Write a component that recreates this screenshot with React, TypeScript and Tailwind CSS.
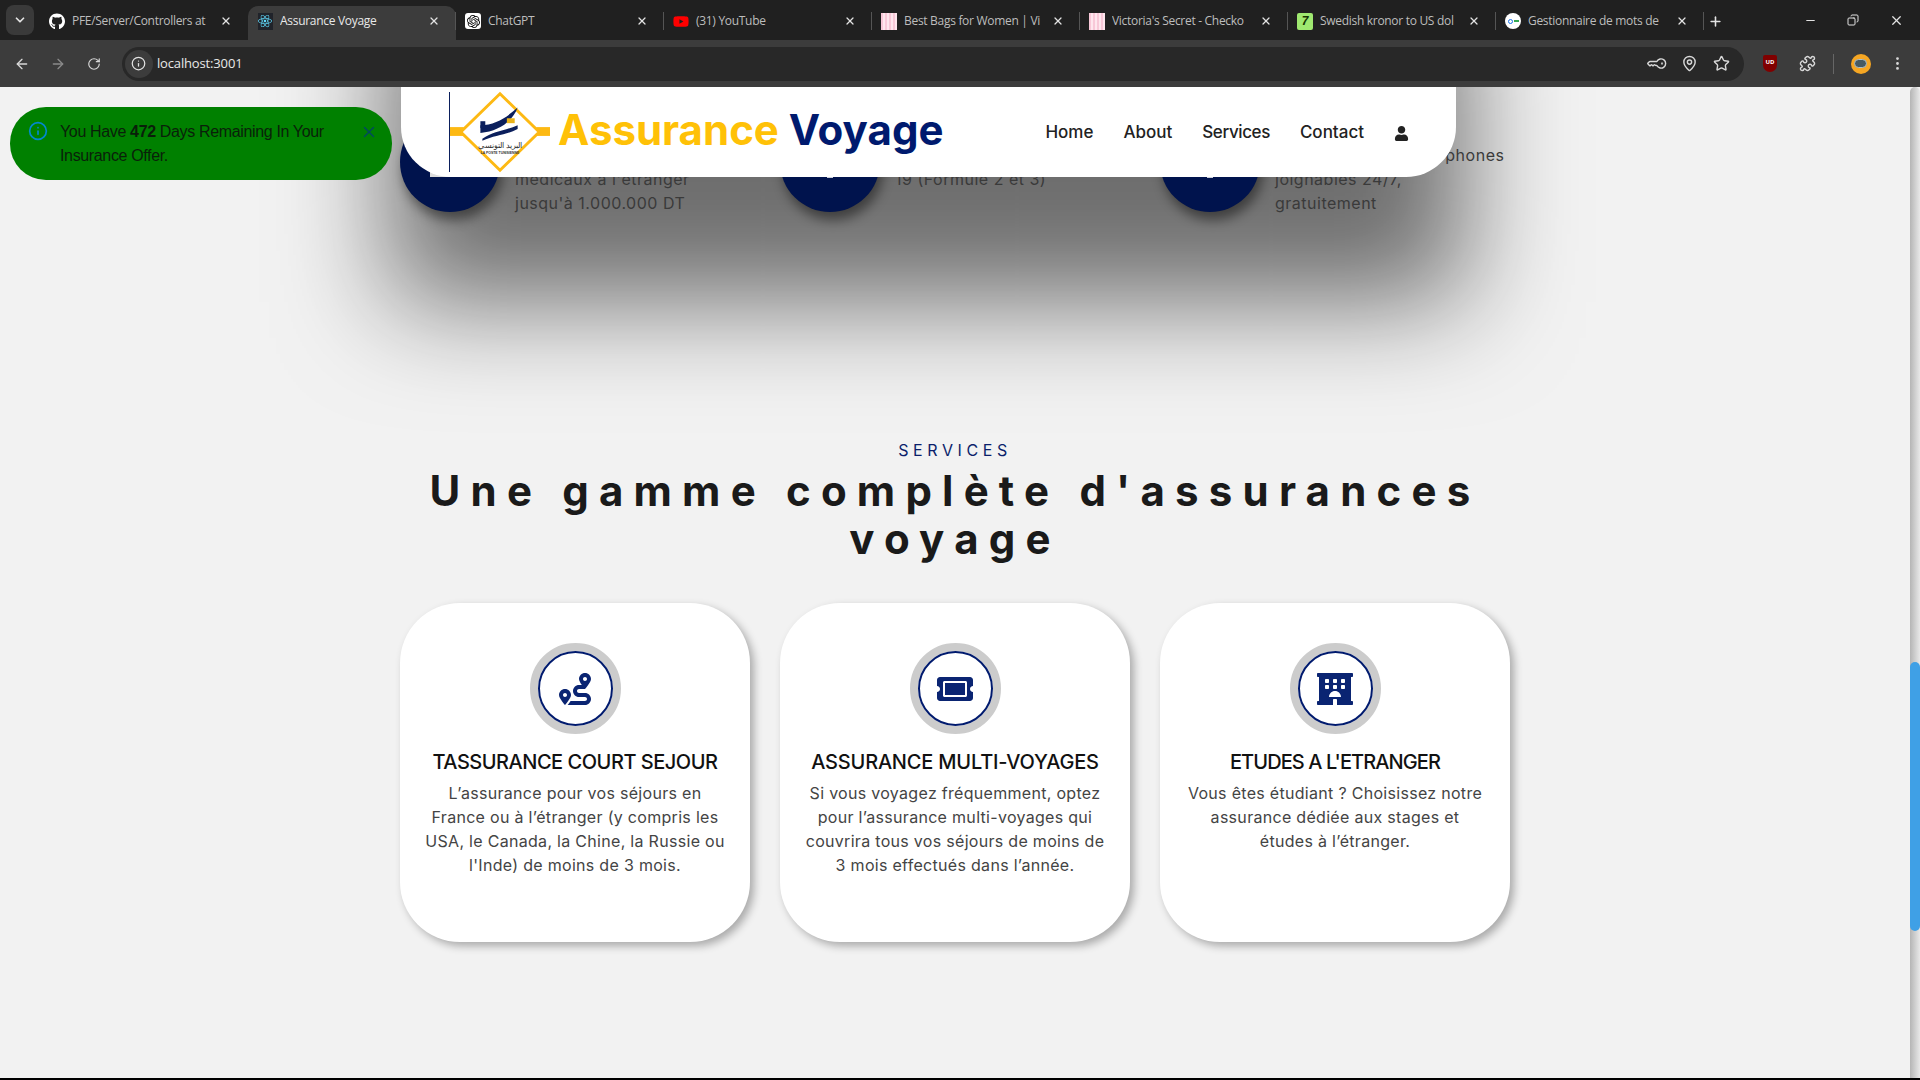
import { ArrowLeft, ArrowRight, RotateCw, Info, KeyRound, MapPin, Star, Puzzle, EllipsisVertical, ChevronDown, X, Plus, Minus, Copy } from "lucide-react";
import { FaGithub, FaYoutube, FaUser, FaRoute, FaTicketAlt, FaHotel, FaReact } from "react-icons/fa";
import { SiOpenai } from "react-icons/si";
import type { ReactNode } from "react";

const tabs: { title: string; icon: ReactNode; active?: boolean; noSep?: boolean }[] = [
  { title: "PFE/Server/Controllers at", icon: <FaGithub size={17} className="text-white" />, noSep: true },
  { title: "Assurance Voyage", icon: <span className="w-[15px] h-[17px] bg-[#20232a] flex items-center justify-center"><FaReact size={14} className="text-[#61dafb]" /></span>, active: true, noSep: true },
  { title: "ChatGPT", icon: <span className="w-[16px] h-[16px] rounded-[3px] bg-white flex items-center justify-center"><SiOpenai size={13} className="text-black" /></span> },
  { title: "(31) YouTube", icon: <FaYoutube size={17} className="text-[#ff0000]" /> },
  { title: "Best Bags for Women | Vi", icon: <span className="w-[16px] h-[17px] bg-[repeating-linear-gradient(90deg,#f8c8d8_0,#f8c8d8_2px,#ffe6ee_2px,#ffe6ee_4px)]" /> },
  { title: "Victoria's Secret - Checko", icon: <span className="w-[16px] h-[17px] bg-[repeating-linear-gradient(90deg,#f8c8d8_0,#f8c8d8_2px,#ffe6ee_2px,#ffe6ee_4px)]" /> },
  { title: "Swedish kronor to US dol", icon: <span className="w-[16px] h-[17px] rounded-[2px] bg-[#9fe870] text-[#163300] text-[12px] font-bold leading-[17px] text-center italic font-['Liberation_Sans',sans-serif]">7</span> },
  { title: "Gestionnaire de mots de", icon: <span className="w-[16px] h-[16px] rounded-full bg-white flex items-center justify-center gap-[1px]"><span className="w-[5px] h-[5px] rounded-full border border-[#1a73e8]" /><span className="w-[5px] h-[2px] bg-[#34a853]" /></span> },
];

const features = [
  { lines: ["Remboursement des frais", "médicaux à l'étranger", "jusqu'à 1.000.000 DT"], mark: "w-[40px] h-[30px] bg-[#dddddd]" },
  { lines: ["Prise en charge Covid-", "19 (Formule 2 et 3)"], mark: "w-[6px] h-[31px] bg-white/80" },
  { lines: ["Des médecins francophones", "joignables 24/7,", "gratuitement"], mark: "w-[6px] h-[31px] bg-white/80" },
];

const services = [
  {
    title: "TASSURANCE COURT SEJOUR",
    spacing: "tracking-[-0.48px]",
    icon: <FaRoute size={32} />,
    lines: ["L’assurance pour vos séjours en", "France ou à l’étranger (y compris les", "USA, le Canada, la Chine, la Russie ou", "l'Inde) de moins de 3 mois."],
  },
  {
    title: "ASSURANCE MULTI-VOYAGES",
    spacing: "tracking-[-0.2px]",
    icon: <FaTicketAlt size={36} />,
    lines: ["Si vous voyagez fréquemment, optez", "pour l’assurance multi-voyages qui", "couvrira tous vos séjours de moins de", "3 mois effectués dans l’année."],
  },
  {
    title: "ETUDES A L'ETRANGER",
    spacing: "tracking-[-0.9px]",
    icon: <FaHotel size={36} />,
    lines: ["Vous êtes étudiant ? Choisissez notre", "assurance dédiée aux stages et", "études à l’étranger."],
  },
];

function Logo() {
  return (
    <svg width="100" height="82" viewBox="0 0 102 82" className="shrink-0">
      <rect x="0" y="36" width="14" height="9" fill="#fdb913" />
      <rect x="88" y="36" width="14" height="9" fill="#fdb913" />
      <polygon points="51,2 91,41 51,80 11,41" fill="#fff" stroke="#fdb913" strokeWidth="3" />
      <path d="M31 34 C46 34 58 26 69 16 C64 30 50 40 31 42 Z" fill="#0b1f5c" />
      <path d="M33 50 C46 44 58 44 69 38 L69 34 C56 40 44 40 33 48 Z" fill="#0b1f5c" />
      <rect x="58" y="27" width="8" height="5" fill="#e8b21a" />
      <rect x="31" y="30" width="5" height="7" fill="#0b1f5c" />
      <text x="51" y="57" textAnchor="middle" fontSize="8" fill="#333" fontFamily="'Noto Sans', sans-serif">البريد التونسي</text>
      <text x="51" y="63" textAnchor="middle" fontSize="3.5" fontWeight="700" fill="#333" fontFamily="'Liberation Sans', sans-serif">LA POSTE TUNISIENNE</text>
    </svg>
  );
}

function BrowserChrome() {
  return (
    <div className="shrink-0 font-['Open_Sans',sans-serif]">
      <div className="h-[40px] bg-[#202020] flex items-end pl-[6px]">
        <div className="w-[28px] h-[30px] self-center rounded-[8px] bg-[#3a3a3a] flex items-center justify-center text-[#e3e3e3] mr-[6px]">
          <ChevronDown size={14} strokeWidth={3} />
        </div>
        {tabs.map((tab) => (
          <div
            key={tab.title}
            className={tab.active ? "w-[208px] h-[34px] pb-[4px] bg-[#3c3c3c] rounded-t-[10px] flex items-center pl-[9px] pr-[8px] shrink-0 text-[#e8e8e8]" : "w-[208px] h-[34px] pb-[4px] flex items-center pl-[9px] pr-[8px] shrink-0 text-[#bdbdbd] relative"}
          >
            <span className="w-[16px] h-[17px] flex items-center justify-center shrink-0">{tab.icon}</span>
            <span className="ml-[7px] w-[145px] text-[12px] tracking-[-0.3px] whitespace-nowrap overflow-hidden">{tab.title}</span>
            <X size={12} strokeWidth={2.5} className="ml-auto mr-[8px] text-[#e3e3e3]" />
            {!tab.noSep && <span className="absolute left-[-1px] top-[6px] w-px h-[18px] bg-[#555]" />}
          </div>
        ))}
        <div className="h-[34px] pb-[4px] flex items-center relative">
          <span className="absolute left-[-1px] top-[6px] w-px h-[18px] bg-[#555]" />
          <Plus size={15} strokeWidth={2.5} className="ml-[4px] text-[#e3e3e3]" />
        </div>
        <div className="ml-auto h-[34px] flex items-center gap-[30px] pr-[16px] text-[#e3e3e3] self-center">
          <Minus size={13} />
          <Copy size={12} className="-scale-x-100" />
          <X size={15} />
        </div>
      </div>
      <div className="h-[47px] bg-[#3c3c3c] flex items-center pl-[14px] pr-[14px] text-[#d8d8d8]">
        <ArrowLeft size={16} />
        <ArrowRight size={16} className="ml-[20px] text-[#8a8a8a]" />
        <RotateCw size={14} className="ml-[21px]" />
        <div className="ml-[21px] w-[1623px] h-[34px] rounded-full bg-[#282828] flex items-center pl-[3px] pr-[14px]">
          <span className="w-[28px] h-[28px] rounded-full bg-[#3c3c3c] flex items-center justify-center">
            <Info size={15} className="text-[#e3e3e3]" />
          </span>
          <span className="ml-[4px] text-[13px] tracking-[-0.15px] text-[#e8e8e8]">localhost:3001</span>
          <div className="ml-auto flex items-center gap-[15px]">
            <KeyRound size={17} className="rotate-45" />
            <MapPin size={17} />
            <Star size={17} />
          </div>
        </div>
        <div className="ml-[19px] w-[14px] h-[17px] rounded-b-[7px] rounded-t-[2px] bg-[#800000] text-white text-[6px] font-bold text-center leading-[15px]">UD</div>
        <Puzzle size={17} className="ml-[22px]" />
        <span className="ml-[17px] w-px h-[20px] bg-[#666]" />
        <span className="ml-[17px] w-[20px] h-[20px] rounded-full bg-[#f5a623] flex items-center justify-center">
          <span className="w-[13px] h-[9px] rounded-full bg-[#455a64] border border-[#b0bec5]" />
        </span>
        <EllipsisVertical size={17} className="ml-[18px]" />
      </div>
    </div>
  );
}

export default function App() {
  return (
    <div className="w-[1920px] h-[1080px] flex flex-col overflow-hidden bg-black">
      <BrowserChrome />

      <div className="h-[991px] shrink-0 flex bg-[#f2f2f2] relative overflow-hidden font-['Inter',sans-serif]">
        {/* big blurred shadow the hero section drops */}
        <div className="absolute left-[390px] top-[-300px] w-[1075px] h-[300px] shadow-[0_215px_110px_rgba(0,0,0,0.55)]" />

        <main className="flex-1 relative">
          <div className="w-[1110px] mx-auto pt-[25px] grid grid-cols-3 gap-[30px]">
            {features.map((f, i) => (
              <div key={i} className="flex gap-[15px]">
                <div className="w-[100px] h-[100px] shrink-0 rounded-full bg-[#00134d] shadow-[3px_8px_12px_rgba(0,0,0,0.45)] flex items-center justify-center">
                  <span className={f.mark} />
                </div>
                <div className="pt-[31px] text-[16px] leading-[24px] text-[#3a3a3a] tracking-[0.5px] whitespace-nowrap">
                  {f.lines.map((l) => (
                    <div key={l}>{l}</div>
                  ))}
                </div>
              </div>
            ))}
          </div>

          <section className="w-[1110px] mx-auto mt-[223px] text-center">
            <div className="text-[16px] leading-[24px] tracking-[4.6px] text-[#0b1f6b]">SERVICES</div>
            <h2 className="mt-[5px] text-[42px] leading-[48px] font-bold tracking-[10.2px] text-[#1a1a1a]">Une gamme complète d'assurances voyage</h2>
            <div className="mt-[40px] grid grid-cols-3 gap-[30px]">
              {services.map((s) => (
                <div key={s.title} className="h-[339px] rounded-[60px] bg-white shadow-[4px_4px_8px_rgba(0,0,0,0.3)] pt-[40px] flex flex-col items-center">
                  <div className="w-[91px] h-[91px] rounded-full border-[8px] border-[#cccccc] flex items-center justify-center">
                    <div className="w-[75px] h-[75px] rounded-full border-2 border-[#001a6e] flex items-center justify-center text-[#0a2472]">
                      {s.icon}
                    </div>
                  </div>
                  <h3 className={`mt-[13px] text-[20px] leading-[30px] font-medium text-[#111] whitespace-nowrap ${s.spacing}`}>{s.title}</h3>
                  <div className="mt-[4px] text-[16px] leading-[24px] text-[#444] tracking-[0.3px] whitespace-nowrap">
                    {s.lines.map((l) => (
                      <div key={l}>{l}</div>
                    ))}
                  </div>
                </div>
              ))}
            </div>
          </section>
        </main>

        <aside className="w-[10px] shrink-0 pt-[575px] pb-[2px] rounded-t-[6px] bg-[linear-gradient(90deg,#b5b5b5,#e8e8e8)]">
          <div className="h-[269px] rounded-[5px] bg-[#3fa0e6]" />
        </aside>

        {/* fixed navbar */}
        <header className="absolute left-[401px] top-0 w-[1055px] h-[90px] bg-white rounded-b-[50px] flex items-center pl-[48px] pr-[47px]">
          <div className="w-px h-[80px] bg-[#0b1f5c] shrink-0" />
          <Logo />
          <div className="ml-[8px] pb-[4px] text-[42px] font-bold leading-none whitespace-nowrap">
            <span className="text-[#ffc107]">Assurance</span>{" "}
            <span className="text-[#001a6e]">Voyage</span>
          </div>
          <nav className="ml-auto flex items-center gap-[30px] text-[17px] font-medium text-[#222] pt-[2px]">
            <span>Home</span>
            <span>About</span>
            <span className="tracking-[-0.4px]">Services</span>
            <span>Contact</span>
            <FaUser size={15} className="text-[#222]" />
          </nav>
        </header>

        {/* toast */}
        <div className="absolute left-[10px] top-[20px] w-[382px] h-[73px] rounded-[36px] bg-[#008000] flex pl-[18px] pr-[14px] pt-[13px] font-['Liberation_Sans',sans-serif] text-[16px] leading-[24px] text-[#0a1f0a]">
          <Info size={20} className="text-[#0288d1] shrink-0 mt-[1px]" />
          <p className="ml-[12px] tracking-[-0.35px] w-[300px] shrink-0">
            You Have <b>472</b> Days Remaining In Your Insurance Offer.
          </p>
          <X size={18} className="text-[#014a5c] shrink-0 mt-[3px]" />
        </div>
      </div>
    </div>
  );
}
